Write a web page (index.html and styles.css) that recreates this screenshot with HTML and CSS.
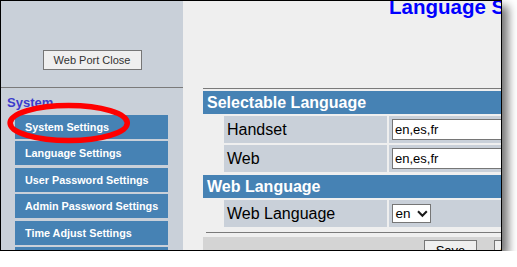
FILE: index.html
```html
<!DOCTYPE html>
<html>
<head>
  <title>Language Settings</title>
  <link rel="stylesheet" href="styles.css">
</head>
<body>
  <div class="shot">
    <div class="side">
      <div class="side-top">
        <button class="btn port">Web Port Close</button>
      </div>
      <div class="side-title">System</div>
      <ul class="menu">
        <li>System Settings</li>
        <li>Language Settings</li>
        <li>User Password Settings</li>
        <li>Admin Password Settings</li>
        <li>Time Adjust Settings</li>
        <li>Network Settings</li>
      </ul>
      <!-- red circle drawn over the first menu entry -->
      <svg class="mark" width="182" height="249" viewBox="0 0 182 249">
        <ellipse cx="67.7" cy="122" rx="58.6" ry="17.6" fill="none" stroke="#f00" stroke-width="5.5"/>
      </svg>
    </div>

    <div class="content">
      <div class="head">
        <h1 class="title">Language Settings</h1>
      </div>

      <div class="grid">
        <div class="sec">Selectable Language</div>
        <div class="label">Handset</div>
        <div class="val"><input class="field" type="text" value="en,es,fr"></div>
        <div class="label">Web</div>
        <div class="val"><input class="field" type="text" value="en,es,fr"></div>

        <div class="sec">Web Language</div>
        <div class="label">Web Language</div>
        <div class="val">
          <span class="pick">en
            <svg width="11" height="8" viewBox="0 0 11 8"><path d="M1 1.2 L5.4 5.8 L9.8 1.2" fill="none" stroke="#1a1a1a" stroke-width="2"/></svg>
          </span>
        </div>
      </div>

      <div class="rule"></div>
      <div class="bar">
        <button class="btn save">Save</button>
        <button class="btn">Cancel</button>
      </div>
    </div>
  </div>
</body>
</html>
```

FILE: styles.css
```css
body {
  margin: 0;
  background: #fff;
  font-family: 'Liberation Sans', Arial, sans-serif;
}

.shot {
  width: 500px;
  height: 249px;
  border: 1px solid #000;
  display: flex;
  overflow: hidden;
  background: #efefef;
  box-shadow: 6px 6px 9px rgba(0, 0, 0, 0.55);
}

/* left menu */

.side {
  position: relative;
  width: 182px;
  flex: none;
  background: #c9d0d9;
}

.side-top {
  height: 87px;
  box-sizing: border-box;
  padding-top: 49px;
  border-bottom: 1px solid #7a7a7a;
  text-align: center;
}

.btn {
  font-family: 'Liberation Sans', Arial, sans-serif;
  font-size: 11px;
  color: #333;
  background: #efefef;
  border: 1px solid #767676;
  padding: 0;
}

.port {
  width: 99px;
  height: 20px;
}

.side-title {
  padding: 7px 0 0 6px;
  font-size: 13px;
  line-height: 15px;
  font-weight: bold;
  color: #3c3ccc;
}

.menu {
  list-style: none;
  margin: 5px 0 0 14px;
  padding: 0;
}

.menu li {
  width: 153px;
  height: 24px;
  margin-bottom: 2.4px;
  box-sizing: border-box;
  padding-left: 10px;
  background: #4682b4;
  color: #fff;
  font-size: 10.8px;
  font-weight: bold;
  line-height: 24px;
  white-space: nowrap;
}

.mark {
  position: absolute;
  left: 0;
  top: 0;
}

/* main area */

.content {
  width: 420px;
  flex: none;
}

.head {
  display: flow-root;
  height: 87px;
  margin-left: 20px;
  border-bottom: 1px solid #7a7a7a;
}

.title {
  margin: -4px 0 0 0;
  padding-left: 186px;
  font-size: 20.5px;
  line-height: 20px;
  color: #0000ff;
  white-space: nowrap;
}

.grid {
  display: grid;
  grid-template-columns: 19px 163px 1fr;
  column-gap: 2px;
  row-gap: 2.4px;
  margin: 1.5px 0 0 20px;
}

.sec {
  grid-column: 1 / -1;
  height: 23px;
  padding-left: 4px;
  background: #4682b4;
  color: #fff;
  font-size: 16px;
  font-weight: bold;
  line-height: 23px;
}

.label {
  grid-column: 2;
  height: 27px;
  padding-left: 3px;
  background: #c9d0d9;
  color: #000;
  font-size: 16px;
  line-height: 27px;
}

.val {
  grid-column: 3;
  display: flex;
  align-items: center;
  padding-left: 3px;
  background: #c9d0d9;
}

.field {
  width: 180px;
  height: 21px;
  box-sizing: border-box;
  margin: 0;
  padding: 0 2px;
  border: 1px solid #767676;
  background: #fff;
  font-family: 'Liberation Sans', Arial, sans-serif;
  font-size: 13px;
  color: #000;
}

.pick {
  display: inline-flex;
  align-items: center;
  gap: 6px;
  width: 39px;
  height: 19.5px;
  box-sizing: border-box;
  padding-left: 2.5px;
  border: 1px solid #767676;
  background: #fff;
  font-size: 13.5px;
  color: #000;
}

.rule {
  margin: 5px 0 0 23px;
  border-top: 1px solid #7a7a7a;
}

.bar {
  display: flex;
  gap: 17px;
  height: 30px;
  margin: 3.6px 0 0 20px;
  padding: 3.3px 0 0 221px;
  background: #d4d4d4;
}

.bar .btn {
  height: 22px;
  width: 53px;
  font-size: 13px;
  color: #000;
}
```
